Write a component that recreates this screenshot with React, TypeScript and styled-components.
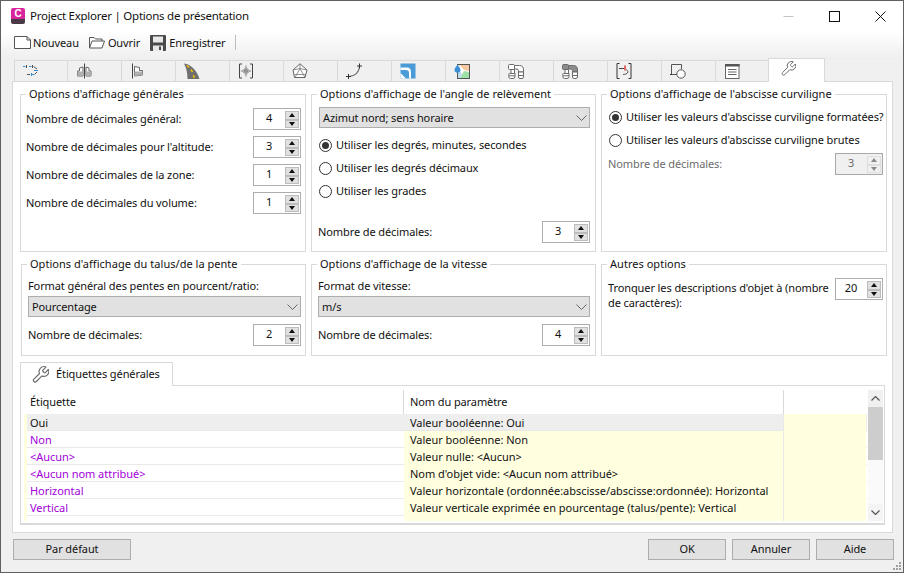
import React from 'react';
import styled, { createGlobalStyle } from 'styled-components';

const Global = createGlobalStyle`
  html, body { margin: 0; padding: 0; background: #f0f0f0; }
  * { box-sizing: border-box; }
`;

const Win = styled.div`
  width: 904px; height: 573px; border: 1px solid #606060; background: #f0f0f0;
  font-family: "Noto Sans", "Open Sans", sans-serif; font-size: 11px; letter-spacing: -0.1px; line-height: 16px; color: #111;
  display: flex; flex-direction: column; overflow: hidden; position: relative;
`;
const TitleBar = styled.div`
  height: 30px; background: #fff; display: flex; align-items: center; padding-left: 10px; flex: none;
`;
const AppIcon = styled.div`
  width: 14px; height: 16px; border-radius: 2px; margin-right: 5px; overflow: hidden; flex: none;
  background: linear-gradient(#d9259b 0 70%, #4a3a48 70%); color: #fff; font: bold 10px/12px "Liberation Sans", sans-serif; letter-spacing: 0; text-align: center;
`;
const TitleText = styled.span` font-size: 11.5px; letter-spacing: -0.25px; flex: 1; `;
const WinControls = styled.div` display: flex; align-items: center; height: 100%; padding-right: 17px; gap: 35px; `;
const Toolbar = styled.div`
  height: 29px; flex: none; background: linear-gradient(#fff, #eeeeee); display: flex; align-items: center; padding: 0 0 6px 13px;
`;
const ToolBtn = styled.div<{ $gap: number }>` display: flex; align-items: center; gap: ${p => p.$gap}px; margin-right: 10px; `;
const ToolSep = styled.div` width: 1px; height: 15px; background: #bdbdbd; `;
const TabStrip = styled.div`
  height: 21px; flex: none; display: flex; margin-left: 13px; position: relative; z-index: 1;
`;
const Tab = styled.div<{ $active?: boolean }>`
  width: ${p => (p.$active ? 57 : 54)}px; flex: none; display: flex; padding-left: ${p => (p.$active ? 11 : 8)}px;
  align-items: ${p => (p.$active ? 'flex-start' : 'center')};
  background: ${p => (p.$active ? '#fff' : '#f0f0f0')};
  border: 1px solid #d9d9d9; border-left: ${p => (p.$active ? '1px solid #d9d9d9' : 'none')};
  border-bottom: none;
  height: ${p => (p.$active ? 24 : 21)}px;
  margin: ${p => (p.$active ? '-2px -1px 0 -2px' : '0')};
  padding-top: ${p => (p.$active ? 1 : 0)}px;
  &:first-child { border-left: 1px solid #d9d9d9; padding-left: 7px; }
`;
const Panel = styled.div`
  margin: 0 10px 0 11px; height: 452px; flex: none; background: #fff; border: 1px solid #d9d9d9; padding: 4px 0 0 7px;
`;
const GroupRow = styled.div<{ $cols: string; $shift?: number; $mb?: number }>`
  display: grid; grid-template-columns: ${p => p.$cols}; gap: 5px; margin-left: ${p => p.$shift || 0}px; margin-bottom: ${p => p.$mb || 0}px;
`;
const Group = styled.fieldset<{ $h: number }>`
  margin: 0; min-width: 0; height: ${p => p.$h}px; border: 1px solid #d9d9d9; padding: 0 4px 0 5px; display: flex; flex-direction: column; position: relative;
`;
const Legend = styled.legend` margin-left: 0; padding: 0 3px; font-size: 11px; letter-spacing: 0.03px; line-height: 16px; `;
const Stack = styled.div<{ $top: number; $gap: number }>`
  display: flex; flex-direction: column; gap: ${p => p.$gap}px; padding-top: ${p => p.$top}px;
`;
const Row = styled.div<{ $disabled?: boolean; $mt?: number; $top?: boolean }>`
  display: flex; justify-content: space-between; align-items: ${p => (p.$top ? 'flex-start' : 'center')}; min-height: 22px;
  color: ${p => (p.$disabled ? '#6d6d6d' : 'inherit')}; margin-top: ${p => p.$mt || 0}px;
`;
const FieldLabel = styled.div` margin-top: 6px; `;
const WrappedLabel = styled.div` margin-top: 2px; line-height: 15px; width: 222px; `;
const Spin = styled.div<{ $disabled?: boolean }>`
  width: 48px; height: 22px; flex: none; border: 1px solid ${p => (p.$disabled ? '#a8a8a8' : '#adadad')}; background: ${p => (p.$disabled ? '#f0f0f0' : '#fff')};
  display: flex; align-items: center; color: ${p => (p.$disabled ? '#6d6d6d' : '#111')};
`;
const SpinValue = styled.span` flex: 1; text-align: center; margin-top: -2px; `;
const SpinBtns = styled.div` width: 16px; height: 100%; padding: 2px 1px; display: flex; flex-direction: column; justify-content: space-between; `;
const SpinBtn = styled.div<{ $disabled?: boolean }>`
  height: 8.5px; flex: none; background: ${p => (p.$disabled ? '#f0f0f0' : '#e1e1e1')}; border: 1px solid ${p => (p.$disabled ? '#dedede' : '#bcbcbc')};
  display: flex; align-items: center; justify-content: center;
`;
const Arrow = styled.i<{ $up?: boolean; $disabled?: boolean }>`
  width: 0; height: 0; border-left: 3.5px solid transparent; border-right: 3.5px solid transparent;
  ${p => (p.$up ? 'border-bottom' : 'border-top')}: 4px solid ${p => (p.$disabled ? '#8a8a8a' : '#111')};
`;
const Select = styled.div`
  height: 21px; background: #e1e1e1; border: 1px solid #adadad; display: flex; align-items: center; justify-content: space-between; padding: 0 2px 0 3px;
`;
const RadioRow = styled.div` display: flex; align-items: center; gap: 4px; height: 16px; white-space: nowrap; `;
const RadioDot = styled.span<{ $on?: boolean }>`
  width: 13px; height: 13px; border-radius: 50%; border: 1px solid #333; background: #fff; flex: none; display: flex; align-items: center; justify-content: center;
  &::after { content: ''; width: 7px; height: 7px; border-radius: 50%; background: ${p => (p.$on ? '#333' : 'transparent')}; }
`;
const Inset = styled.div<{ $l?: number; $r?: number }>` padding-left: ${p => p.$l ?? 0}px; margin-right: ${p => p.$r ?? 0}px; `;
const SubTab = styled.div`
  width: 153px; height: 24px; background: #fff; border: 1px solid #d9d9d9; border-bottom: none; display: flex; align-items: center; gap: 7px; padding: 0 0 2px 10px; position: relative; z-index: 1; margin-bottom: -1px;
`;
const SubPanel = styled.div`
  width: 865px; height: 140px; border: 1px solid #d9d9d9; border-bottom: 2px solid #d9d9d9; padding: 4px 1px 2px 3px; display: flex; gap: 1px;
`;
const Table = styled.div` flex: 1; height: 131px; overflow: hidden; min-width: 0; `;
const Head = styled.div`
  height: 24px; display: grid; grid-template-columns: 380px 380px 82px;
`;
const HeadCell = styled.div` padding: 4px 0 0 6px; border-right: 1px solid #d9d9d9; &:last-child { border-right: 0; } `;
const TRow = styled.div<{ $sel?: boolean }>`
  height: 17px; display: grid; grid-template-columns: 3px 377px 380px 82px; border-bottom: 1px solid #e9e9e9;
  background: ${p => (p.$sel ? '#eeeeee' : 'transparent')};
  line-height: 17px; letter-spacing: -0.03px;
`;
const Stub = styled.div` background: #ffffe0; `;
const Cell1 = styled.div<{ $color: string }>` padding-left: 3px; color: ${p => p.$color}; white-space: nowrap; `;
const Cell2 = styled.div<{ $sel?: boolean }>` padding-left: 6px; background: ${p => (p.$sel ? 'transparent' : '#ffffe0')}; white-space: nowrap; border-right: 1px solid #e9e9e9; overflow: hidden; `;
const Cell3 = styled.div` background: #ffffe0; `;
const Scroll = styled.div` width: 15px; height: 131px; flex: none; display: flex; flex-direction: column; background: #fafafa; `;
const ScrollBtn = styled.div<{ $end?: boolean }>` height: 17px; flex: none; display: flex; align-items: center; justify-content: center; background: ${p => (p.$end ? '#f4f4f4' : '#f0f0f0')}; margin-top: ${p => (p.$end ? 'auto' : '0')}; `;
const Thumb = styled.div` height: 53px; background: #cdcdcd; `;
const Footer = styled.div` flex: 1; display: flex; justify-content: space-between; padding: 6px 9px 0 12px; `;
const Btn = styled.div<{ $w: number }>`
  width: ${p => p.$w}px; height: 21px; background: #e1e1e1; border: 1px solid #adadad; display: flex; align-items: center; justify-content: center; padding-bottom: 1px;
`;
const BtnRow = styled.div` display: flex; gap: 6px; `;
const Grip = styled.svg` position: absolute; right: 1px; bottom: 1px; `;

const Ic: React.FC<{ children: React.ReactNode; w?: number; h?: number; vb?: string }> = ({ children, w = 16, h = 16, vb }) => (
  <svg width={w} height={h} viewBox={vb || `0 0 ${w} ${h}`} fill="none" style={{ flex: 'none', display: 'block' }}>{children}</svg>
);

const WrenchPath = ({ c = '#6a6a6a', sw = 1 }) => (
  <g transform="scale(0.72)" stroke={c} strokeWidth={sw / 0.72} strokeLinejoin="round" fill="none" >
    <path d="M14.7 6.3a1 1 0 0 0 0 1.4l1.6 1.6a1 1 0 0 0 1.4 0l3.77-3.77a6 6 0 0 1-7.94 7.94l-6.91 6.91a2.12 2.12 0 0 1-3-3l6.91-6.91a6 6 0 0 1 7.94-7.94l-3.76 3.76z" />
  </g>
);

const pipes = (filled: boolean) => (
  <Ic>
    <g stroke="#6b6b6b" strokeWidth="1" fill={filled ? '#8c8c8c' : '#fff'}>
      <path d="M6 2.5H11.5Q15.5 2.5 15.5 7V9H10.5V7.5Q10.5 6 9 6H6Z" />
      <path d="M1.5 1.5H5.5Q6.5 1.5 6.5 2.5V6Q6.5 6.5 5.5 6.5H1.5Q0.5 6.5 0.5 5.5V2.5Q0.5 1.5 1.5 1.5Z" />
    </g>
    <g stroke="#6b6b6b" strokeWidth="1" fill="#fff">
      <path d="M3 6.5H6.5V10.5H3Z" />
      <path d="M1.5 10.5H7V13.5Q7 15.5 5 15.5H2.5Q0.8 15.5 0.8 13.5V11.2Q0.8 10.5 1.5 10.5Z" />
      <path d="M1 12.8H7" />
      <path d="M10.5 9H15.5V14Q15.5 15.5 14 15.5H12Q10.5 15.5 10.5 14Z" />
      <path d="M10.5 12.5H15.5" />
    </g>
  </Ic>
);

const tabIcons: React.ReactNode[] = [
  <Ic key="1">
    <g strokeWidth="1">
      <path d="M1 3.5H3.5M7 3.5H9.5" stroke="#3a8ed0" />
      <path d="M4.5 2V5M10.5 2V5M11.5 3.5L15 6" stroke="#555" />
      <path d="M12 7.5H16" stroke="#3a8ed0" />
      <path d="M5 11.5H8M15 9L12.5 11.5" stroke="#555" />
      <path d="M9.5 10V13M10 11.5H12" stroke="#3a8ed0" />
    </g>
  </Ic>,
  <Ic key="2">
    <path d="M1.5 13V8H3.5V5L7 4V13Z M15 13V8H13V5L10 4V13Z" fill="#fff" stroke="#666" />
    <path d="M1.5 8.5H7V13H1.5Z M10 8.5H15V13H10Z" fill="#b0b0b0" />
    <path d="M8.5 0.5V15.5" stroke="#444" />
  </Ic>,
  <Ic key="3">
    <path d="M2.5 0.5V15.5" stroke="#444" />
    <path d="M4.5 3.5L9.5 4.5V7.5H12.5V12L4.5 13Z" fill="#fff" stroke="#666" />
    <path d="M4.5 8.5H12.5V12L4.5 13Z" fill="#b0b0b0" />
  </Ic>,
  <Ic key="4">
    <path d="M0 0.5C6 1 13 7 15.5 16H3.5C3.5 10 2.5 5 0 0.5Z" fill="#6f6f6f" />
    <path d="M3 2.5L5 4.5M7 6.5L8.5 9M9.5 12L10 15" stroke="#f0c400" strokeWidth="1.5" />
  </Ic>,
  <Ic key="5">
    <path d="M4 1H1.5V15H4M12 1H14.5V15H12" stroke="#444" />
    <path d="M8 4.5L11.5 8L8 11.5L4.5 8Z" stroke="#777" />
    <circle cx="8" cy="8" r="1.3" stroke="#555" />
    <path d="M8 2.5V4.5M8 11.5V13.5M2.8 8H4.5M11.5 8H13.2" stroke="#888" />
  </Ic>,
  <Ic key="6">
    <path d="M8 0.8L15 7L13 14.5H2.5L1 7Z" stroke="#666" fill="#fff" />
    <path d="M1 7L8 5.5L15 7M8 5.5L3 14.5M8 5.5L13 14.5M8 .8V5.5M2.5 11.5H13.7" stroke="#777" strokeWidth=".8" />
  </Ic>,
  <Ic key="7">
    <path d="M3 13.5C9 13.5 13 9 13.5 4" stroke="#6a6a6a" strokeWidth="1.1" />
    <path d="M0 13.5H5M2.5 11V16M11 3H16M13.5 0.5V5.5" stroke="#333" />
  </Ic>,
  <Ic key="8">
    <rect x="0.5" y="0.5" width="15" height="15" fill="#4b9bd8" />
    <path d="M0.5 4.5H7Q11 4.5 11 9V15.5H9V10Q9 7 6 7H0.5Z" fill="#fff" />
    <path d="M0.5 10L6 15.5H0.5Z" fill="#fff" />
  </Ic>,
  <Ic key="9">
    <rect x="3.5" y="1.5" width="12" height="14" fill="#fff" stroke="#555" />
    <path d="M4 2H15V8L10 7L7 3.5Z" fill="#f7c9a0" />
    <path d="M6 15L10 8L15 9V15Z" fill="#9fe0a8" />
    <path d="M4 8H6L8 11L6 15H4Z" fill="#bcdcf2" />
    <path d="M3.5 1.5C2 4 0.5 5 0.5 7C0.5 8.8 2 9.7 3.5 9.7C5 9.7 6.5 8.8 6.5 7C6.5 5 5 4 3.5 1.5Z" fill="#3b8fd6" />
  </Ic>,
  <React.Fragment key="10">{pipes(false)}</React.Fragment>,
  <React.Fragment key="11">{pipes(true)}</React.Fragment>,
  <Ic key="12">
    <path d="M3.5 0.5H1V15.5H3.5M12.5 0.5H15V15.5H12.5" stroke="#333" />
    <path d="M3 5.5H8" stroke="#444" />
    <path d="M9 2.5V7.5" stroke="#d81e1e" strokeWidth="1.3" />
    <path d="M10.5 6.5Q12.8 8.5 11.5 10Q10.2 11.5 7 11.5" stroke="#555" />
  </Ic>,
  <Ic key="13">
    <path d="M1.5 1.5H11.5V6M1.5 1.5V11.5H7" stroke="#555" />
    <path d="M0 11.5H2" stroke="#333" />
    <circle cx="11" cy="11" r="4.2" stroke="#555" fill="#fff" />
  </Ic>,
  <Ic key="14">
    <rect x="1.5" y="1.5" width="13.5" height="14" stroke="#666" fill="#fff" />
    <rect x="1" y="1" width="14.5" height="2.5" fill="#555" />
    <path d="M4 6.5H12.5M4 9H12.5M4 11.5H12.5" stroke="#666" />
  </Ic>,
];

const Spinner: React.FC<{ v: string; disabled?: boolean }> = ({ v, disabled }) => (
  <Spin $disabled={disabled}>
    <SpinValue>{v}</SpinValue>
    <SpinBtns>
      <SpinBtn $disabled={disabled}><Arrow $up $disabled={disabled} /></SpinBtn>
      <SpinBtn $disabled={disabled}><Arrow $disabled={disabled} /></SpinBtn>
    </SpinBtns>
  </Spin>
);

const Chevron = () => (
  <svg width="11" height="6" viewBox="0 0 11 6" fill="none"><path d="M0.5 0.5L5.5 5.5L10.5 0.5" stroke="#666" /></svg>
);

const Dropdown: React.FC<{ t: string }> = ({ t }) => (
  <Select><span>{t}</span><Chevron /></Select>
);

const Radio: React.FC<{ t: string; on?: boolean }> = ({ t, on }) => (
  <RadioRow><RadioDot $on={on} /><span>{t}</span></RadioRow>
);

const rows: [string, string, string][] = [
  ['Oui', 'Valeur booléenne: Oui', '#111'],
  ['Non', 'Valeur booléenne: Non', '#a200d8'],
  ['<Aucun>', 'Valeur nulle: <Aucun>', '#a200d8'],
  ['<Aucun nom attribué>', "Nom d'objet vide: <Aucun nom attribué>", '#a200d8'],
  ['Horizontal', 'Valeur horizontale (ordonnée:abscisse/abscisse:ordonnée): Horizontal', '#a200d8'],
  ['Vertical', 'Valeur verticale exprimée en pourcentage (talus/pente): Vertical', '#a200d8'],
  ['Talus', "Unité de la ligne de talus exprimée dans l'axe horizontal: Talus", '#a200d8'],
];

export default function App() {
  return (
    <>
      <Global />
      <Win>
        <TitleBar>
          <AppIcon>C</AppIcon>
          <TitleText>Project Explorer | Options de présentation</TitleText>
          <WinControls>
            <svg width="11" height="11" viewBox="0 0 11 11"><path d="M0.5 5.5H10.5" stroke="#c4c4c4" /></svg>
            <svg width="11" height="11" viewBox="0 0 11 11"><rect x="0.5" y="0.5" width="10" height="10" fill="none" stroke="#111" /></svg>
            <svg width="11" height="11" viewBox="0 0 11 11"><path d="M0.5 0.5L10.5 10.5M10.5 0.5L0.5 10.5" stroke="#111" /></svg>
          </WinControls>
        </TitleBar>
        <Toolbar>
          <ToolBtn $gap={2}>
            <Ic w={17} h={13}><path d="M0.5 0.5H13L16.5 4V12.5H0.5Z" stroke="#555" fill="#fff" /><path d="M13 0.5V4H16.5" stroke="#555" /></Ic>
            Nouveau
          </ToolBtn>
          <ToolBtn $gap={3}>
            <Ic w={16} h={13}><path d="M0.5 12V1.5H5L6.5 3H13V5" stroke="#555" fill="#fff" /><path d="M0.5 12L3 5H15.5L13 12Z" stroke="#555" fill="#fff" /></Ic>
            Ouvrir
          </ToolBtn>
          <ToolBtn $gap={3}>
            <Ic w={16} h={16}><rect x="0" y="0" width="16" height="16" rx="1" fill="#4a4a4a" /><rect x="3" y="1.5" width="10" height="6" fill="#e8e8e8" /><rect x="3" y="10.5" width="10" height="5.5" fill="#e8e8e8" /><rect x="9" y="11.5" width="2" height="3.5" fill="#4a4a4a" /></Ic>
            Enregistrer
          </ToolBtn>
          <ToolSep />
        </Toolbar>
        <TabStrip>
          {tabIcons.map((ic, i) => <Tab key={i}>{ic}</Tab>)}
          <Tab $active><Ic><WrenchPath /></Ic></Tab>
        </TabStrip>
        <Panel>
          <GroupRow $cols="286px 285px 286px" $mb={4}>
            <Group $h={166}>
              <Legend>Options d'affichage générales</Legend>
              <Stack $top={6} $gap={6}>
                <Row>Nombre de décimales général:<Spinner v="4" /></Row>
                <Row>Nombre de décimales pour l'altitude:<Spinner v="3" /></Row>
                <Row>Nombre de décimales de la zone:<Spinner v="1" /></Row>
                <Row>Nombre de décimales du volume:<Spinner v="1" /></Row>
              </Stack>
            </Group>
            <Group $h={166}>
              <Legend>Options d'affichage de l'angle de relèvement</Legend>
              <Inset $l={2} $r={1}>
                <Stack $top={5} $gap={0}>
                  <Dropdown t="Azimut nord; sens horaire" />
                </Stack>
                <Stack $top={9} $gap={7}>
                  <Radio t="Utiliser les degrés, minutes, secondes" on />
                  <Radio t="Utiliser les degrés décimaux" />
                  <Radio t="Utiliser les grades" />
                </Stack>
              </Inset>
              <Inset $l={1} $r={1}>
                <Row $mt={22}>Nombre de décimales:<Spinner v="3" /></Row>
              </Inset>
            </Group>
            <Group $h={166}>
              <Legend>Options d'affichage de l'abscisse curviligne</Legend>
              <Inset $l={2}>
                <Stack $top={7} $gap={7}>
                  <Radio t="Utiliser les valeurs d'abscisse curviligne formatées?" on />
                  <Radio t="Utiliser les valeurs d'abscisse curviligne brutes" />
                </Stack>
              </Inset>
              <Inset $l={1} $r={-1}>
                <Row $disabled $mt={5}>Nombre de décimales:<Spinner v="3" disabled /></Row>
              </Inset>
            </Group>
          </GroupRow>
          <GroupRow $cols="285px 285px 286px" $shift={1} $mb={6}>
            <Group $h={100}>
              <Legend>Options d'affichage du talus/de la pente</Legend>
              <Inset $l={1}>
                <FieldLabel>Format général des pentes en pourcent/ratio:</FieldLabel>
                <Stack $top={2} $gap={0}><Dropdown t="Pourcentage" /></Stack>
                <Row $mt={7}>Nombre de décimales:<Spinner v="2" /></Row>
              </Inset>
            </Group>
            <Group $h={100}>
              <Legend>Options d'affichage de la vitesse</Legend>
              <Inset $l={1} $r={1}>
                <FieldLabel>Format de vitesse:</FieldLabel>
                <Stack $top={2} $gap={0}><Dropdown t="m/s" /></Stack>
                <Row $mt={7}>Nombre de décimales:<Spinner v="4" /></Row>
              </Inset>
            </Group>
            <Group $h={100}>
              <Legend>Autres options</Legend>
              <Inset $l={1} $r={-1}>
                <Row $top $mt={6}>
                  <WrappedLabel>Tronquer les descriptions d'objet à (nombre de caractères):</WrappedLabel>
                  <Spinner v="20" />
                </Row>
              </Inset>
            </Group>
          </GroupRow>
          <SubTab>
            <Ic w={18} h={18} vb="0 0 16 16"><WrenchPath /></Ic>
            Étiquettes générales
          </SubTab>
          <SubPanel>
            <Table>
              <Head>
                <HeadCell>Étiquette</HeadCell>
                <HeadCell>Nom du paramètre</HeadCell>
                <HeadCell />
              </Head>
              {rows.map((r, i) => (
                <TRow key={r[0]} $sel={i === 0}>
                  <Stub />
                  <Cell1 $color={r[2]}>{r[0]}</Cell1>
                  <Cell2 $sel={i === 0}>{r[1]}</Cell2>
                  <Cell3 />
                </TRow>
              ))}
            </Table>
            <Scroll>
              <ScrollBtn><svg width="9" height="5" viewBox="0 0 9 5" fill="none"><path d="M0.5 4.5L4.5 0.5L8.5 4.5" stroke="#555" strokeWidth="1.2" /></svg></ScrollBtn>
              <Thumb />
              <ScrollBtn $end><svg width="9" height="5" viewBox="0 0 9 5" fill="none"><path d="M0.5 0.5L4.5 4.5L8.5 0.5" stroke="#555" strokeWidth="1.2" /></svg></ScrollBtn>
            </Scroll>
          </SubPanel>
        </Panel>
        <Footer>
          <Btn $w={118}>Par défaut</Btn>
          <BtnRow>
            <Btn $w={78}>OK</Btn>
            <Btn $w={78}>Annuler</Btn>
            <Btn $w={78}>Aide</Btn>
          </BtnRow>
        </Footer>
        <Grip width="9" height="9" viewBox="0 0 9 9">
          <g fill="#a0a0a0"><rect x="6" y="0" width="2" height="2" /><rect x="3" y="3" width="2" height="2" /><rect x="6" y="3" width="2" height="2" /><rect x="0" y="6" width="2" height="2" /><rect x="3" y="6" width="2" height="2" /><rect x="6" y="6" width="2" height="2" /></g>
        </Grip>
      </Win>
    </>
  );
}
